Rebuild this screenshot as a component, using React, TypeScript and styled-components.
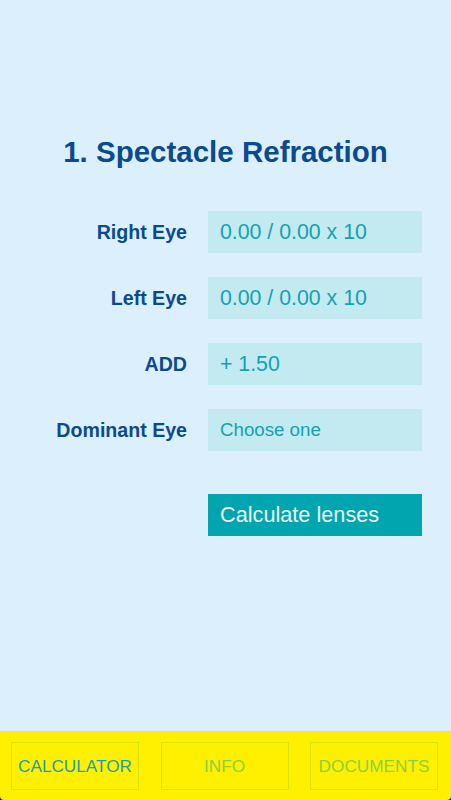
import React from "react";
import styled, { createGlobalStyle } from "styled-components";

const Global = createGlobalStyle`
  html, body { margin: 0; padding: 0; background: #000; }
  body { font-family: "Liberation Sans", Arial, Helvetica, sans-serif; }
  * { box-sizing: border-box; }
`;

const Screen = styled.div`
  width: 451px;
  height: 800px;
  display: flex;
  flex-direction: column;
  background: #000;
  overflow: hidden;
`;

const Main = styled.main`
  flex: 1;
  background: #dbf0fc;
  display: flex;
  flex-direction: column;
  padding-top: 135px;
`;

const Title = styled.h1`
  margin: 0 0 42px;
  text-align: center;
  font-size: 29.5px;
  line-height: 34px;
  font-weight: 700;
  color: #0b4a8e;
`;

const Form = styled.div`
  display: grid;
  grid-template-columns: 1fr 214px;
  column-gap: 21px;
  row-gap: 24px;
  padding-right: 29px;
`;

const Label = styled.div`
  display: flex;
  align-items: center;
  justify-content: flex-end;
  height: 42px;
  font-size: 19.6px;
  font-weight: 700;
  color: #0b4a8e;
`;

const Field = styled.div<{ $small?: boolean }>`
  display: flex;
  align-items: center;
  height: 42px;
  padding-left: 12px;
  background: #c3eaf0;
  color: #12a2b2;
  font-size: ${(p) => (p.$small ? "18.7px" : "21.3px")};
`;

const Button = styled.button`
  grid-column: 2;
  margin-top: 19px;
  height: 42px;
  border: none;
  padding: 0 0 0 12px;
  text-align: left;
  background: #00a5b0;
  color: #e8f7f8;
  font-family: inherit;
  font-size: 21.7px;
`;

const TabBar = styled.nav`
  height: 69px;
  background: #fff000;
  border-radius: 0 0 4px 4px;
  display: grid;
  grid-template-columns: repeat(3, 128px);
  justify-content: space-between;
  padding: 11px 13px 10px 11px;
`;

const Tab = styled.div<{ $active?: boolean }>`
  display: flex;
  align-items: center;
  justify-content: center;
  border: 1px solid #dbe300;
  font-size: 17.2px;
  color: ${(p) => (p.$active ? "#1a9fb2" : "#8dd03c")};
`;

const rows = [
  { label: "Right Eye", value: "0.00 / 0.00 x 10" },
  { label: "Left Eye", value: "0.00 / 0.00 x 10" },
  { label: "ADD", value: "+ 1.50" },
  { label: "Dominant Eye", value: "Choose one", small: true },
];

export default function App() {
  return (
    <>
      <Global />
      <Screen>
        <Main>
          <Title>1. Spectacle Refraction</Title>
          <Form>
            {rows.map((r) => (
              <React.Fragment key={r.label}>
                <Label>{r.label}</Label>
                <Field $small={r.small}>{r.value}</Field>
              </React.Fragment>
            ))}
            <Button>Calculate lenses</Button>
          </Form>
        </Main>
        <TabBar>
          <Tab $active>CALCULATOR</Tab>
          <Tab>INFO</Tab>
          <Tab>DOCUMENTS</Tab>
        </TabBar>
      </Screen>
    </>
  );
}
